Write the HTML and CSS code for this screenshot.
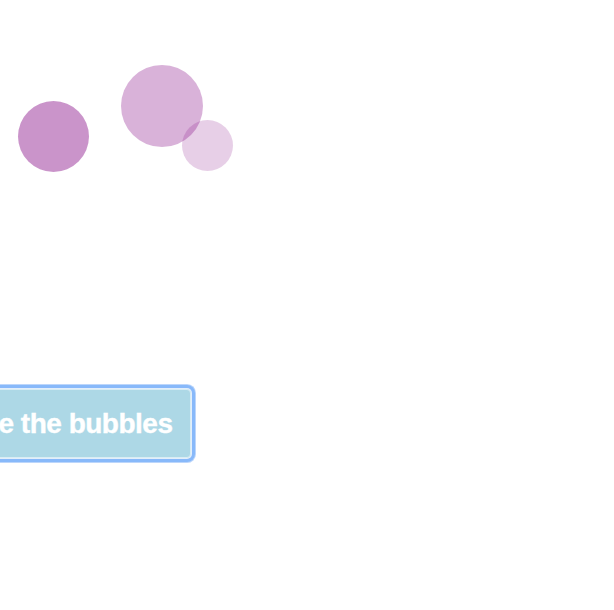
FILE: index.html
```html
<!DOCTYPE html>
<html>
<head>
<meta charset="utf-8">
<link rel="stylesheet" href="styles.css">
</head>
<body>
<div class="stage">
  <svg class="bubbles" width="614" height="389" viewBox="0 0 614 389">
    <circle cx="53.5" cy="136.5" r="35.5" fill="purple" fill-opacity="0.42"/>
    <circle cx="162" cy="106" r="41" fill="purple" fill-opacity="0.3"/>
    <circle cx="207.5" cy="145.5" r="25.5" fill="purple" fill-opacity="0.19"/>
  </svg>
  <button class="move-btn">Move the bubbles</button>
</div>
</body>
</html>
```
FILE: styles.css
```css
html {
  margin: 0;
  padding: 0;
  background: #ffffff;
  overflow: hidden;
}
body {
  margin: 0;
  padding: 0;
}
.stage {
  display: flex;
  flex-direction: column;
  align-items: flex-start;
  padding-bottom: 40px;
}
.bubbles {
  display: block;
}
.move-btn {
  margin-left: -75px;
  height: 69px;
  box-sizing: border-box;
  padding: 0 18px;
  border: 1px solid #d8edf4;
  background: #add8e6;
  color: #ffffff;
  font-family: "Liberation Sans", Arial, sans-serif;
  font-weight: bold;
  font-size: 28px;
  letter-spacing: -0.5px;
  line-height: 67px;
  white-space: nowrap;
  -webkit-text-stroke: 0.4px #ffffff;
  box-shadow: 0 0 0 1px #e2eefb, 0 0 0 4px #88b9fa, 0 0 0 5px #bcd6fb;
  border-radius: 4px;
  outline: none;
}
```
